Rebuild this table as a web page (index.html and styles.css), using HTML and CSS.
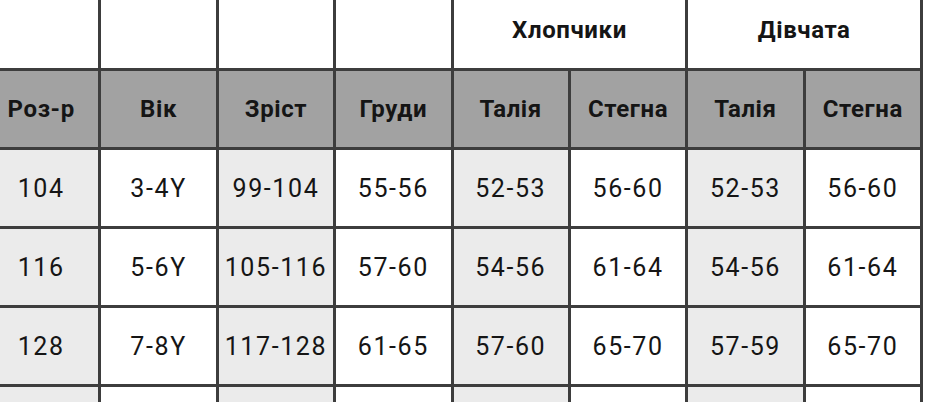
FILE: index.html
```html
<!DOCTYPE html>
<html lang="uk">
<head>
<meta charset="utf-8">
<title>Таблиця розмірів</title>
<link rel="stylesheet" href="styles.css">
</head>
<body>
<table class="sizes">
  <tbody>
    <tr class="group-row">
      <td class="blank"></td>
      <td class="blank"></td>
      <td class="blank"></td>
      <td class="blank"></td>
      <th class="group" colspan="2">Хлопчики</th>
      <th class="group" colspan="2">Дівчата</th>
    </tr>
    <tr class="head-row">
      <th>Роз-р</th>
      <th>Вік</th>
      <th>Зріст</th>
      <th>Груди</th>
      <th>Талія</th>
      <th>Стегна</th>
      <th>Талія</th>
      <th>Стегна</th>
    </tr>
    <tr>
      <td class="shade">104</td><td>3-4Y</td><td class="shade">99-104</td><td>55-56</td>
      <td class="shade">52-53</td><td>56-60</td><td class="shade">52-53</td><td>56-60</td>
    </tr>
    <tr>
      <td class="shade">116</td><td>5-6Y</td><td class="shade">105-116</td><td>57-60</td>
      <td class="shade">54-56</td><td>61-64</td><td class="shade">54-56</td><td>61-64</td>
    </tr>
    <tr>
      <td class="shade">128</td><td>7-8Y</td><td class="shade">117-128</td><td>61-65</td>
      <td class="shade">57-60</td><td>65-70</td><td class="shade">57-59</td><td>65-70</td>
    </tr>
    <tr>
      <td class="shade"></td><td></td><td class="shade"></td><td></td>
      <td class="shade"></td><td></td><td class="shade"></td><td></td>
    </tr>
  </tbody>
</table>
</body>
</html>
```

FILE: styles.css
```css
html, body {
  margin: 0;
  padding: 0;
  background: #ffffff;
  overflow: hidden;
}

body {
  font-family: Roboto, "Liberation Sans", sans-serif;
  color: #151515;
}

.sizes {
  border-collapse: collapse;
  table-layout: fixed;
  width: 942px;
  margin-left: -19px;
  margin-top: -17px;
}

.sizes td,
.sizes th {
  border: 3px solid #3d3d3d;
  height: 76px;
  padding: 0;
  text-align: center;
  vertical-align: middle;
}

.sizes td {
  font-size: 25px;
  font-weight: 400;
  letter-spacing: 1.6px;
  background: #ffffff;
}

.sizes td.shade {
  background: #ebebeb;
}

.sizes th {
  font-size: 24px;
  font-weight: 700;
  letter-spacing: 0.6px;
}

.head-row th {
  background: #a2a2a2;
}

.group-row .group {
  background: #ffffff;
  padding-top: 6px;
}

.group-row .blank {
  background: #ffffff;
}
```
